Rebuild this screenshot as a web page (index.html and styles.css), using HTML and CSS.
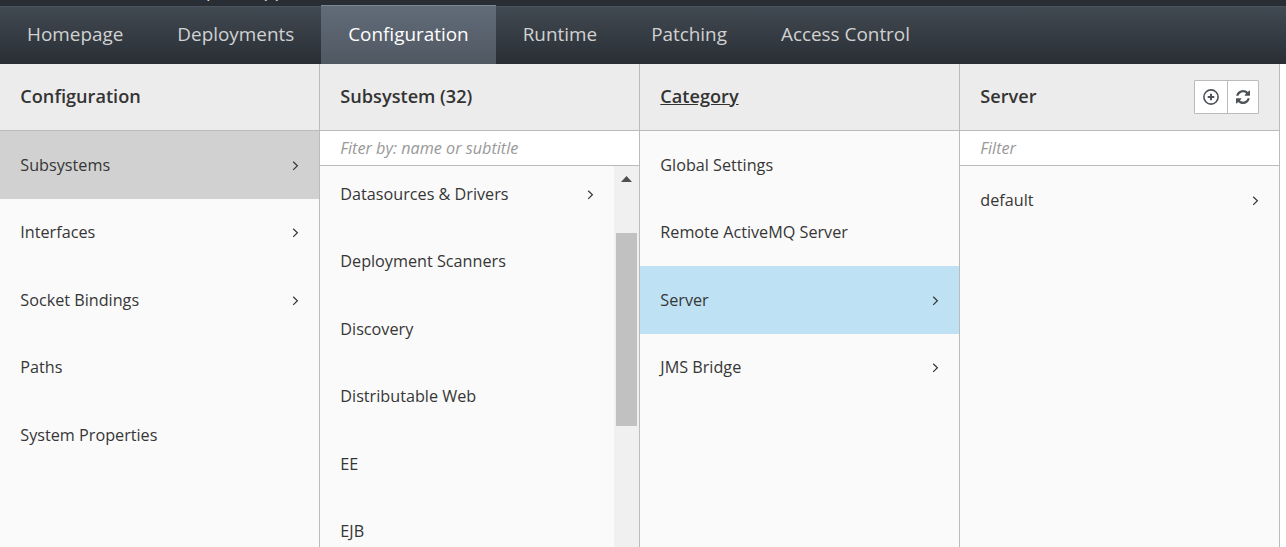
FILE: index.html
```html
<!DOCTYPE html>
<html lang="en">
<head>
<meta charset="utf-8">
<title>Management Console</title>
<link rel="stylesheet" href="styles.css">
</head>
<body>
<svg class="defs" width="0" height="0" aria-hidden="true">
  <symbol id="angle" viewBox="0 0 7 11"><path d="M1.2 1.7 5.4 5.8 1.2 9.9" fill="none" stroke="currentColor" stroke-width="1.2"/></symbol>
</svg>
<header class="masthead">
  <div class="brand"><span>Enterprise Application</span></div>
  <nav class="nav">
    <a class="nav-item">Homepage</a>
    <a class="nav-item">Deployments</a>
    <a class="nav-item active">Configuration</a>
    <a class="nav-item">Runtime</a>
    <a class="nav-item">Patching</a>
    <a class="nav-item">Access Control</a>
  </nav>
</header>
<main class="finder">
  <section class="column">
    <div class="column-head"><h1>Configuration</h1></div>
    <ul class="items">
      <li class="item selected"><span>Subsystems</span><svg class="angle"><use href="#angle"/></svg></li>
      <li class="item"><span>Interfaces</span><svg class="angle"><use href="#angle"/></svg></li>
      <li class="item"><span>Socket Bindings</span><svg class="angle"><use href="#angle"/></svg></li>
      <li class="item"><span>Paths</span></li>
      <li class="item"><span>System Properties</span></li>
    </ul>
  </section>
  <section class="column">
    <div class="column-head"><h1>Subsystem (32)</h1></div>
    <div class="filter">Fiter by: name or subtitle</div>
    <div class="scroller">
      <ul class="items scrolled">
        <li class="item"><span>Datasources &amp; Drivers</span><svg class="angle"><use href="#angle"/></svg></li>
        <li class="item"><span>Deployment Scanners</span></li>
        <li class="item"><span>Discovery</span></li>
        <li class="item"><span>Distributable Web</span></li>
        <li class="item"><span>EE</span></li>
        <li class="item"><span>EJB</span></li>
      </ul>
      <div class="scrollbar">
        <div class="arrow"></div>
        <div class="thumb"></div>
      </div>
    </div>
  </section>
  <section class="column">
    <div class="column-head"><h1 class="current">Category</h1></div>
    <ul class="items">
      <li class="item"><span>Global Settings</span></li>
      <li class="item"><span>Remote ActiveMQ Server</span></li>
      <li class="item focused"><span>Server</span><svg class="angle"><use href="#angle"/></svg></li>
      <li class="item"><span>JMS Bridge</span><svg class="angle"><use href="#angle"/></svg></li>
    </ul>
  </section>
  <section class="column">
    <div class="column-head">
      <h1>Server</h1>
      <div class="actions">
        <a class="btn"><svg width="16" height="16" viewBox="0 0 16 16" fill="none" stroke="currentColor"><circle cx="8" cy="8" r="7.1" stroke-width="1.6"/><path d="M8 4.7v6.6M4.7 8h6.6" stroke-width="2"/></svg></a>
        <a class="btn"><svg width="14" height="14" viewBox="0 0 1536 1536" fill="currentColor"><path d="M1511 928q0 5-1 7-64 268-268 434.500T764 1536q-146 0-282.500-55T238 1324l-129 129q-19 19-45 19t-45-19-19-45V960q0-26 19-45t45-19h448q26 0 45 19t19 45-19 45l-137 137q71 66 161 102t187 36q134 0 250-65t186-179q11-17 53-117 8-23 30-23h192q13 0 22.500 9.500t9.500 22.500zM1536 128v448q0 26-19 45t-45 19h-448q-26 0-45-19t-19-45 19-45l138-138Q969 256 768 256q-134 0-250 65T332 500q-11 17-53 117-8 23-30 23H50q-13 0-22.500-9.500T18 608v-7q65-268 270-434.500T768 0q146 0 284 55.500T1297 212l130-129q19-19 45-19t45 19 19 45z"/></svg></a>
      </div>
    </div>
    <div class="filter">Filter</div>
    <ul class="items">
      <li class="item"><span>default</span><svg class="angle"><use href="#angle"/></svg></li>
    </ul>
  </section>
</main>
</body>
</html>
```
FILE: styles.css
```css
* { box-sizing: border-box; }
body {
  margin: 0;
  height: 547px;
  overflow: hidden;
  display: flex;
  flex-direction: column;
  background: #fff;
  color: #363636;
  font: 16.2px/23px "Open Sans", "Noto Sans", sans-serif;
}
.defs { position: absolute; }
.masthead { flex: none; height: 64px; background: #292e34; }
/* The brand line is scrolled out of view; only its descenders remain. */
.brand {
  height: 6px;
  padding: 0 0 6px 161px;
  display: flex;
  align-items: flex-end;
  overflow: hidden;
  color: #e0e0e0;
  font-size: 18px;
  line-height: 20px;
  white-space: nowrap;
}
.nav {
  height: 58px;
  display: flex;
  border-top: 1px solid #4a525d;
  background: linear-gradient(#414952, #292e34);
}
.nav-item {
  height: 57px;
  padding: 0 27px;
  color: #d1d1d1;
  font-size: 18.9px;
  line-height: 54px;
  white-space: nowrap;
}
.nav-item.active {
  height: 59px;
  margin-top: -2px;
  border-top: 1px solid #7a8794;
  line-height: 56px;
  color: #fff;
  background: linear-gradient(#616c79, #505862);
}
.finder { flex: 1; min-height: 0; display: flex; }
.column {
  width: 320px;
  flex: none;
  display: flex;
  flex-direction: column;
  border-right: 1px solid #bbb;
  background: #fafafa;
  overflow: hidden;
}
.column-head {
  flex: none;
  height: 67px;
  padding: 0 20px 1px 20.3px;
  display: flex;
  align-items: center;
  justify-content: space-between;
  border-bottom: 1px solid #b9bac0;
  background: #ececec;
}
h1 { margin: 0 0 2px; font-size: 18.15px; font-weight: 600; line-height: 24px; color: #333; }
h1.current { text-decoration: underline; }
.actions { margin-top: 1px; display: flex; border: 1px solid #bbb; border-radius: 1px; background: #fff; }
.btn {
  width: 32px;
  height: 32px;
  display: flex;
  align-items: center;
  justify-content: center;
  color: #4d5258;
}
.btn + .btn { width: 31px; border-left: 1px solid #bbb; }
.filter {
  flex: none;
  height: 35px;
  padding: 0 20.3px;
  border-bottom: 1px solid #b9bac0;
  background: #fff;
  color: #999;
  font-style: italic;
  line-height: 35px;
}
.items { margin: 0; padding: 0; list-style: none; }
.item {
  height: 67.5px;
  padding: 1px 20px 0 20.3px;
  display: flex;
  align-items: center;
  justify-content: space-between;
}
.selected { background: #d1d1d1; }
.focused { background: #bee1f4; }
.angle { width: 7px; height: 11px; }
.scroller { flex: 1; min-height: 0; display: flex; overflow: hidden; }
.scrolled { flex: 1; margin-top: -6px; }
.scrollbar { width: 25px; padding: 10px 2px; background: #f0f0f0; }
.arrow {
  width: 11px;
  height: 6px;
  margin: 0 auto;
  background: #505050;
  clip-path: polygon(50% 0, 100% 100%, 0 100%);
}
.thumb { height: 193px; margin-top: 51px; background: #c1c1c1; }
```
